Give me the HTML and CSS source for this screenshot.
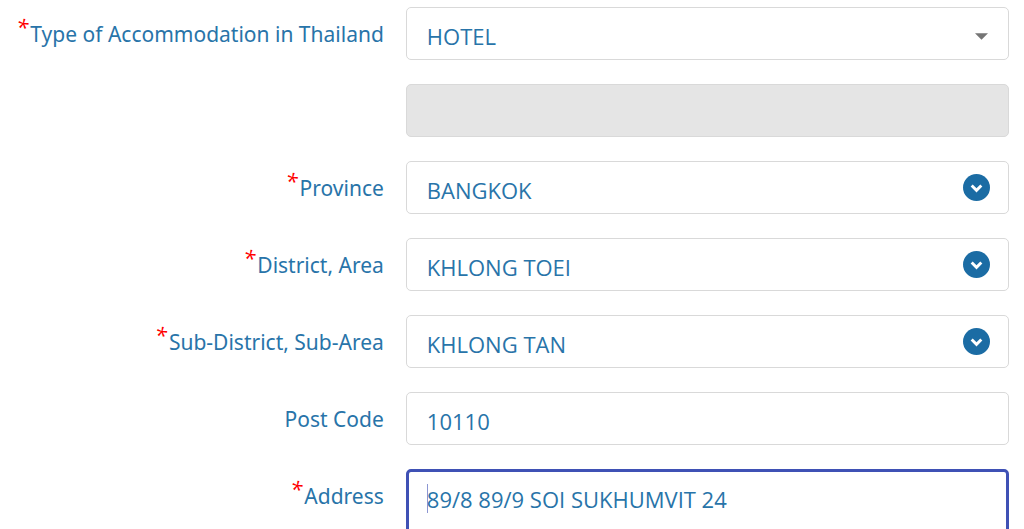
FILE: index.html
```html
<!DOCTYPE html>
<html lang="en">
<head>
    <meta charset="UTF-8">
    <meta name="viewport" content="width=device-width, initial-scale=1.0">
    <title>Accommodation</title>
    <link rel="stylesheet" href="styles.css">
</head>
<body>
    <form class="form">
        <div class="row">
            <label class="label" for="type"><span class="required">*</span>Type of Accommodation in Thailand</label>
            <div class="field">
                <select class="control" id="type">
                    <option>HOTEL</option>
                </select>
                <svg class="arrow" viewBox="0 0 14 7" aria-hidden="true"><path d="M0 0h14L7 7z"/></svg>
            </div>
        </div>

        
        <div class="row">
            <span></span>
            <div class="field">
                <input class="control" type="text" aria-label="Other accommodation" disabled>
            </div>
        </div>

        <div class="row">
            <label class="label" for="province"><span class="required">*</span>Province</label>
            <div class="field">
                <input class="control" type="text" id="province" value="BANGKOK">
                <button class="toggle" type="button" aria-label="Show provinces">
                    <svg viewBox="0 0 28 28"><path d="M9 12l5 5 5-5"/></svg>
                </button>
            </div>
        </div>

        <div class="row">
            <label class="label" for="district"><span class="required">*</span>District, Area</label>
            <div class="field">
                <input class="control" type="text" id="district" value="KHLONG TOEI">
                <button class="toggle" type="button" aria-label="Show districts">
                    <svg viewBox="0 0 28 28"><path d="M9 12l5 5 5-5"/></svg>
                </button>
            </div>
        </div>

        <div class="row">
            <label class="label" for="subdistrict"><span class="required">*</span>Sub-District, Sub-Area</label>
            <div class="field">
                <input class="control" type="text" id="subdistrict" value="KHLONG TAN">
                <button class="toggle" type="button" aria-label="Show sub-districts">
                    <svg viewBox="0 0 28 28"><path d="M9 12l5 5 5-5"/></svg>
                </button>
            </div>
        </div>

        <div class="row">
            <label class="label" for="postcode">Post Code</label>
            <div class="field">
                <input class="control" type="text" id="postcode" value="10110">
            </div>
        </div>

        <div class="row">
            <label class="label" for="address"><span class="required">*</span>Address</label>
            <div class="field field-active">
                <textarea class="control address" id="address" rows="3">89/8 89/9 SOI SUKHUMVIT 24</textarea>
            </div>
        </div>
    </form>
</body>
</html>
```
FILE: styles.css
```css
* {
  margin: 0;
  padding: 0;
  box-sizing: border-box;
}

body {
  height: 100vh;
  overflow: hidden;
  background-color: white;
  color: #2874a9;
  font-family: 'Open Sans', sans-serif;
  font-size: 22px;
  line-height: 30px;
}

.form {
  display: flex;
  flex-direction: column;
  gap: 24px;
  padding: 7px 15px 0 0;
}

.row {
  display: grid;
  grid-template-columns: 7fr 11fr;
  column-gap: 22px;
}

.label {
  display: flex;
  justify-content: flex-end;
  padding-top: 12px;
  font-family: 'Noto Sans', sans-serif;
  font-size: 21px;
  white-space: nowrap;
}

.required {
  margin-top: -8px;
  margin-right: 2px;
  color: #ff0000;
  font-size: 22px;
  font-style: italic;
}

.field {
  position: relative;
}

.control {
  display: block;
  width: 100%;
  height: 53px;
  padding: 4px 20px 0;
  border: 1px solid #d9d9d9;
  border-radius: 5px;
  outline: none;
  background-color: white;
  color: inherit;
  font: inherit;
  appearance: none;
}

.control:disabled {
  background-color: #e5e5e5;
}

.address {
  height: 130px;
  padding: 12px 18px;
  border: 3px solid #3f51b5;
  resize: none;
}

/* icons at the right end of a field */
.arrow {
  position: absolute;
  top: 26px;
  right: 21px;
  width: 13px;
  height: 7px;
  fill: #757575;
  pointer-events: none;
}

.toggle {
  position: absolute;
  top: 13px;
  right: 19px;
  width: 27px;
  height: 27px;
  border: none;
  border-radius: 50%;
  background-color: #1b6ca4;
  cursor: pointer;
}

.toggle svg {
  display: block;
  width: 100%;
  fill: none;
  stroke: white;
  stroke-width: 3;
}

/* text cursor */
.field-active::before {
  content: '';
  position: absolute;
  top: 15px;
  left: 21px;
  width: 1px;
  height: 29px;
  background-color: #8c96d2;
}
```
